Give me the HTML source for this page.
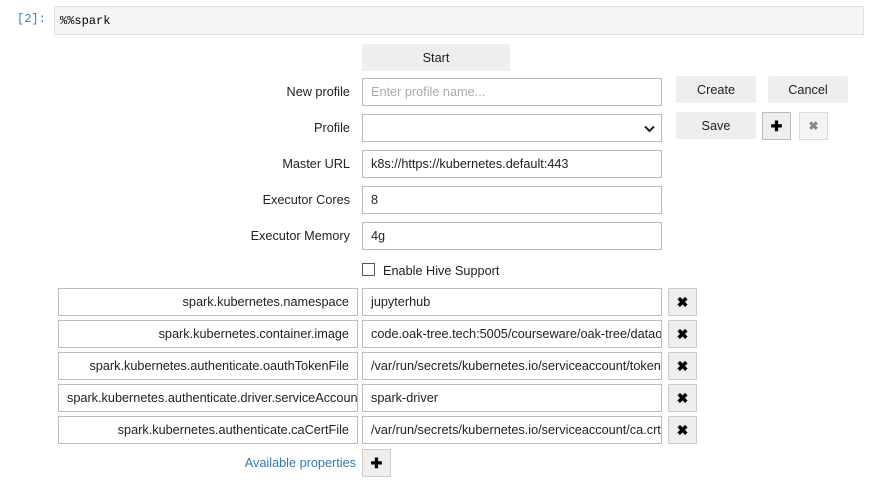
<!DOCTYPE html>
<html><head><meta charset="utf-8"><style>
*{box-sizing:border-box;margin:0;padding:0}
body{width:872px;height:483px;background:#fff;font-family:"Liberation Sans",sans-serif;font-size:12.7px;color:#000;position:relative;overflow:hidden}
.a{position:absolute}
.prompt{left:17px;top:12px;font-family:"Liberation Mono",monospace;font-size:12px;color:#307fc1}
.cell{left:54px;top:6px;width:810px;height:29px;background:#f5f5f5;border:1px solid #e0e0e0;font-family:"Liberation Mono",monospace;font-size:12px;padding:7px 5px}
.btn{background:#eee;border-radius:2px;text-align:center;line-height:28px;height:27px;color:#222}
.inp{border:1px solid #bbb;height:28px;width:300px;line-height:27px;padding:0 8px;white-space:nowrap;overflow:hidden;background:#fff;color:#222}
.lbl{right:522px;text-align:right;line-height:29px;color:#222}
.key{text-align:right}
.x{width:29px;height:28px;background:#eee;border:1px solid #ccc;border-radius:1px;text-align:center;line-height:26px;font-weight:bold;font-size:14px}
</style></head><body>
<div class="a prompt">[2]:</div>
<div class="a cell">%%spark</div>
<div class="a btn" style="left:362px;top:44px;width:148px">Start</div>

<div class="a lbl" style="top:78px">New profile</div>
<div class="a inp" style="left:362px;top:78px;color:#aaa">Enter profile name...</div>
<div class="a btn" style="left:676px;top:76px;width:80px">Create</div>
<div class="a btn" style="left:768px;top:76px;width:80px">Cancel</div>

<div class="a lbl" style="top:114px">Profile</div>
<div class="a inp" style="left:362px;top:114px"><svg class="a" style="right:6px;top:10px" width="11" height="8" viewBox="0 0 11 8"><path d="M1 1.5L5.5 6L10 1.5" stroke="#222" stroke-width="2" fill="none"/></svg></div>
<div class="a btn" style="left:676px;top:112px;width:80px">Save</div>
<div class="a x" style="left:762px;top:112px;width:29px;background:#eee;border-color:#bbb">✚</div>
<div class="a x" style="left:799px;top:112px;width:29px;background:#f4f4f4;border-color:#ddd;color:#888;font-size:12px">✖</div>

<div class="a lbl" style="top:150px">Master URL</div>
<div class="a inp" style="left:362px;top:150px">k8s://https://kubernetes.default:443</div>
<div class="a lbl" style="top:186px">Executor Cores</div>
<div class="a inp" style="left:362px;top:186px">8</div>
<div class="a lbl" style="top:222px">Executor Memory</div>
<div class="a inp" style="left:362px;top:222px">4g</div>

<div class="a" style="left:362px;top:263px;width:13px;height:13px;border:1px solid #555;background:#fff"></div>
<div class="a" style="left:383px;top:264px;color:#222">Enable Hive Support</div>

<div class="a inp key" style="left:58px;top:288px">spark.kubernetes.namespace</div>
<div class="a inp" style="left:362px;top:288px">jupyterhub</div>
<div class="a x" style="left:668px;top:288px">✖</div>
<div class="a inp key" style="left:58px;top:320px">spark.kubernetes.container.image</div>
<div class="a inp" style="left:362px;top:320px">code.oak-tree.tech:5005/courseware/oak-tree/dataops</div>
<div class="a x" style="left:668px;top:320px">✖</div>
<div class="a inp key" style="left:58px;top:352px">spark.kubernetes.authenticate.oauthTokenFile</div>
<div class="a inp" style="left:362px;top:352px">/var/run/secrets/kubernetes.io/serviceaccount/token</div>
<div class="a x" style="left:668px;top:352px">✖</div>
<div class="a inp" style="left:58px;top:384px">spark.kubernetes.authenticate.driver.serviceAccountName</div>
<div class="a inp" style="left:362px;top:384px">spark-driver</div>
<div class="a x" style="left:668px;top:384px">✖</div>
<div class="a inp key" style="left:58px;top:416px">spark.kubernetes.authenticate.caCertFile</div>
<div class="a inp" style="left:362px;top:416px">/var/run/secrets/kubernetes.io/serviceaccount/ca.crt</div>
<div class="a x" style="left:668px;top:416px">✖</div>

<div class="a" style="right:516px;top:456px;color:#337ab7">Available properties</div>
<div class="a x" style="left:362px;top:449px;border-color:#ccc">✚</div>
</body></html>
